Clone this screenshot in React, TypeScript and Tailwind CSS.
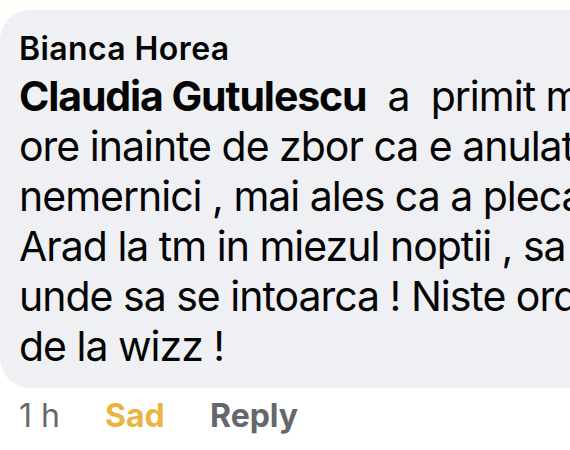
import React from "react";

const lines = [
  "ore inainte de zbor ca e anulat",
  "nemernici , mai ales ca a plecat",
  "Arad la tm in miezul noptii , sa",
  "unde sa se intoarca ! Niste ordinari",
  "de la wizz !",
];

export default function App() {
  return (
    <div
      className="w-[570px] h-[450px] bg-white overflow-hidden text-[#050505]"
      style={{ fontFamily: "Inter, 'Noto Sans', sans-serif" }}
    >
      <div className="h-[10px] bg-[#fefefb]" />
      <div className="w-[640px] rounded-[30px] bg-[#eff0f4] pl-[19px] pt-[20px] pb-[17px]">
        <div className="text-[32px] leading-[38px] font-semibold whitespace-nowrap tracking-[0.4px]">
          Bianca Horea
        </div>
        <div className="mt-[3px] text-[41px] leading-[50px] whitespace-pre tracking-[-1px]">
          <span className="font-bold tracking-[-1.1px]">Claudia Gutulescu</span>
          {"  a  primit mail"}
        </div>
        {lines.map((l) => (
          <div key={l} className="text-[41px] leading-[50px] whitespace-pre tracking-[-1px]">
            {l}
          </div>
        ))}
      </div>
      <div className="flex items-center pl-[19px] pt-[10px] text-[32px] leading-[36px] whitespace-nowrap">
        <span className="text-[#65676b] w-[86px]">1 h</span>
        <span className="text-[#e9b440] font-bold w-[105px]">Sad</span>
        <span className="text-[#65676b] font-bold">Reply</span>
      </div>
    </div>
  );
}
